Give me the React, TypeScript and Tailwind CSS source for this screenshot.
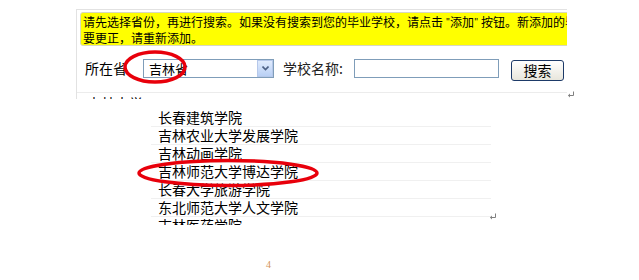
import React from 'react';

const schools = [
  '长春建筑学院',
  '吉林农业大学发展学院',
  '吉林动画学院',
  '吉林师范大学博达学院',
  '长春大学旅游学院',
  '东北师范大学人文学院',
];

const cjk = { fontFamily: '"Noto Sans CJK SC", "DejaVu Sans", sans-serif' };

const ReturnMark: React.FC = () => (
  <svg width="8" height="8" viewBox="0 0 8 8" className="text-[#808080]">
    <path d="M6.5 0.5 V4.5 H1.5" fill="none" stroke="currentColor" strokeWidth="1" />
    <path d="M1 4.5 L3 2.5 V6.5 Z" fill="currentColor" />
  </svg>
);

const App: React.FC = () => {
  return (
    <div className="relative w-[639px] h-[280px] bg-white overflow-hidden text-black" style={cjk}>
      {/* embedded screenshot */}
      <div className="absolute left-[76px] top-[9px] w-[491px] h-[90px] border-l border-t border-[#e2e2e2] overflow-hidden">
        <div className="ml-[3px] mt-[2px] w-[520px] h-[34px] rounded-[3px] bg-[#ffff00] border border-[#d8d8c0] px-[2px] pt-[1px] text-[12px] leading-[16px] whitespace-nowrap">
          <div>请先选择省份，再进行搜索。如果没有搜索到您的毕业学校，请点击 <span className="text-[9px] align-top">"</span>添加<span className="text-[9px] align-top">"</span> 按钮。新添加的毕业学校</div>
          <div>要更正，请重新添加。</div>
        </div>

        <div className="flex items-center h-[20px] mt-[12px] text-[14px] leading-[20px]">
          <span className="ml-[8px] w-[58px]">所在省</span>
          <div className="flex items-center w-[131px] h-[19px] border border-[#7f9db9] bg-white">
            <span className="flex-1 pl-[5px] text-[13px] leading-[17px]">吉林省</span>
            <div className="flex items-center justify-center w-[16px] h-[17px] bg-gradient-to-b from-[#e0ebfd] to-[#b9d0f5] border border-[#b6c8ea]">
              <svg width="7" height="5" viewBox="0 0 7 5">
                <path d="M0.5 0.5 L3.5 3.5 L6.5 0.5" fill="none" stroke="#4d6185" strokeWidth="1.6" />
              </svg>
            </div>
          </div>
          <span className="ml-[9px] w-[71px] text-[#222]">学校名称:</span>
          <div className="w-[145px] h-[19px] border border-[#7f9db9] bg-white" />
          <button className="ml-[12px] mt-[4px] w-[53px] h-[21px] rounded-[3px] border border-[#1d3a68] bg-gradient-to-b from-white to-[#e8e6dc] text-[14px] leading-[18px]">
            搜索
          </button>
        </div>

        <div className="mt-[14px] border-t border-[#ececec]" />
        <div className="ml-[10px] mt-[3px] text-[14px] leading-[14px]">吉林大学</div>
      </div>

      <div className="absolute left-[567px] top-[91px]">
        <ReturnMark />
      </div>

      {/* school list */}
      <div className="absolute left-[151px] top-[109px] w-[340px] h-[116px] overflow-hidden text-[14px]">
        {schools.map((s) => (
          <div key={s} className="h-[18px] leading-[17px] pl-[7px] border-b border-[#f0f0f0]">
            {s}
          </div>
        ))}
        <div className="h-[18px] leading-[17px] pl-[7px]">吉林医药学院</div>
      </div>

      <div className="absolute left-[489px] top-[213px]">
        <ReturnMark />
      </div>

      {/* red annotation ellipses */}
      <svg className="absolute left-0 top-0 pointer-events-none" width="639" height="280">
        <ellipse cx="155" cy="67" rx="30" ry="15" fill="none" stroke="#e8000b" strokeWidth="3.5" />
        <ellipse cx="228" cy="173" rx="89" ry="12.5" fill="none" stroke="#e8000b" strokeWidth="3.5" />
      </svg>

      <div className="absolute left-[266px] top-[257px] text-[10px] text-[#d4945a]" style={{ fontFamily: '"Liberation Serif", serif' }}>
        4
      </div>
    </div>
  );
};

export default App;
